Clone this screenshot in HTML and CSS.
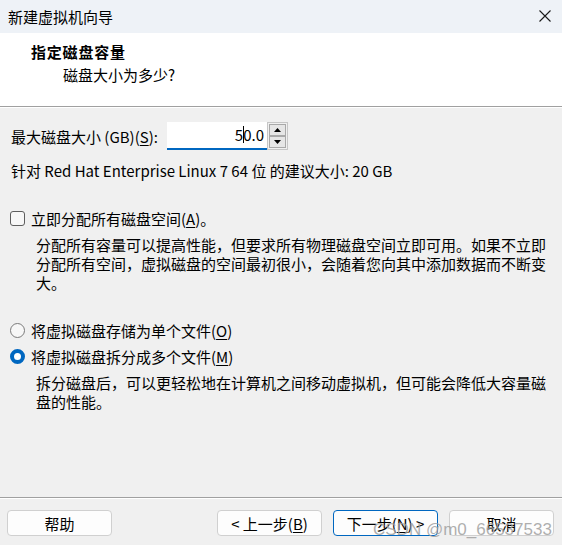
FILE: index.html
```html
<!DOCTYPE html>
<html lang="zh-CN">
<head>
<meta charset="utf-8">
<title>新建虚拟机向导</title>
<link rel="stylesheet" href="styles.css">
</head>
<body>
<div class="dialog">
  <div class="titlebar">
    <span class="title">新建虚拟机向导</span>
    <span class="close">
      <svg width="12" height="12" viewBox="0 0 12 12"><path d="M0.5 0.5 L11.5 11.5 M11.5 0.5 L0.5 11.5" stroke="#1a1a1a" stroke-width="1.1" fill="none"/></svg>
    </span>
  </div>
  <div class="header">
    <div class="h-title">指定磁盘容量</div>
    <div class="h-sub">磁盘大小为多少?</div>
  </div>
  <div class="body">
    <div class="size-row">
      <span class="size-label">最大磁盘大小 (GB)(<u>S</u>):</span>
      <div class="spin">
        <div class="spin-input"><span>5</span><span class="caret"></span><span>0.0</span></div>
        <div class="spin-btns">
          <span class="sb"><svg width="7" height="4" viewBox="0 0 7 4"><path d="M0 4 L3.5 0 L7 4 Z" fill="#000"/></svg></span>
          <span class="sb"><svg width="7" height="4" viewBox="0 0 7 4"><path d="M0 0 L3.5 4 L7 0 Z" fill="#000"/></svg></span>
        </div>
      </div>
    </div>
    <div class="hint">针对 Red Hat Enterprise Linux 7 64 位 的建议大小: 20 GB</div>
    <div class="option check-row"><span class="checkbox"></span><span>立即分配所有磁盘空间(<u>A</u>)。</span></div>
    <p class="desc">分配所有容量可以提高性能，但要求所有物理磁盘空间立即可用。如果不立即分配所有空间，虚拟磁盘的空间最初很小，会随着您向其中添加数据而不断变大。</p>
    <div class="option radio-row first"><span class="radio"></span><span>将虚拟磁盘存储为单个文件(<u>O</u>)</span></div>
    <div class="option radio-row"><span class="radio on"></span><span>将虚拟磁盘拆分成多个文件(<u>M</u>)</span></div>
    <p class="desc">拆分磁盘后，可以更轻松地在计算机之间移动虚拟机，但可能会降低大容量磁盘的性能。</p>
  </div>
  <div class="footer">
    <button class="btn">帮助</button>
    <button class="btn back">&lt; 上一步(<u>B</u>)</button>
    <button class="btn primary">下一步(<u>N</u>) &gt;</button>
    <button class="btn">取消</button>
  </div>
  <div class="watermark">CSDN @m0_66537533</div>
</div>
</body>
</html>
```

FILE: styles.css
```css
* { box-sizing: border-box; }
html, body { margin: 0; padding: 0; }
body {
  width: 562px;
  height: 545px;
  overflow: hidden;
  background: #f0f0f0;
  font-family: "Noto Sans CJK SC", "Microsoft YaHei", sans-serif;
  font-size: 15px;
  color: #000;
}
u { text-decoration: underline; text-decoration-thickness: 1px; text-underline-offset: 2px; }

.dialog {
  position: relative;
  width: 562px;
  height: 545px;
  display: flex;
  flex-direction: column;
  background: #f0f0f0;
}

.titlebar {
  height: 33px;
  flex: none;
  display: flex;
  align-items: center;
  padding: 0 11px 0 8px;
  background: #eef2f7;
}
.title { font-size: 15px; line-height: 19px; color: #000; }
.close { margin-left: auto; display: flex; margin-top: -1px; }

.header {
  height: 74px;
  flex: none;
  background: #fff;
  border-bottom: 1px solid #a0a0a0;
  padding: 9px 0 0 31px;
}
.h-title { font-weight: 700; font-size: 15px; line-height: 19px; letter-spacing: 0.8px; }
.h-sub { margin: 4px 0 0 32px; font-size: 15px; line-height: 19px; }

.body {
  flex: 1;
  padding: 15px 8px 0 11px;
  box-shadow: inset 0 1px 0 #ffffff;
}

.size-row { display: flex; align-items: center; height: 28px; }
.size-label { width: 156px; line-height: 19px; flex: none; }
.spin { display: flex; height: 28px; }
.spin-input {
  width: 100px;
  height: 28px;
  background: #fff;
  border-bottom: 2px solid #0067c0;
  display: flex;
  align-items: center;
  justify-content: flex-end;
  padding: 0 3px 1px 0;
  line-height: 19px;
}
.caret { display: inline-block; width: 1px; height: 17px; background: #000; margin: 0 -1px 0 0; position: relative; }
.spin-btns {
  width: 21px;
  height: 28px;
  display: flex;
  flex-direction: column;
  border: 1px solid #c6c6c6;
  padding: 1px;
  gap: 0;
  background: #f0f0f0;
}
.sb {
  flex: 1;
  border: 1px solid #a9a9a9;
  background: #e6e6e6;
  display: flex;
  align-items: center;
  justify-content: center;
}

.hint { margin-top: 11px; line-height: 19px; }

.option { display: flex; align-items: center; line-height: 19px; height: 19px; }
.check-row { margin-top: 29px; }
.checkbox {
  width: 15px; height: 15px;
  border: 1px solid #5e5e5e;
  border-radius: 3px;
  background: #f7f7f7;
  margin: 0 6px 0 -1px;
  flex: none;
}
.radio-row { margin-top: 7px; }
.radio-row.first { margin-top: 29px; }
.radio {
  width: 15px; height: 15px;
  border: 1px solid #7a7a7a;
  border-radius: 50%;
  background: #f7f7f7;
  margin: 0 6px 0 -1px;
  flex: none;
}
.radio.on {
  border: 4.5px solid #0067c0;
  background: #fff;
}

.desc {
  margin: 7px 0 0 25px;
  line-height: 19px;
}

.footer {
  height: 48px;
  flex: none;
  border-top: 1px solid #a0a0a0;
  box-shadow: inset 0 1px 0 #ffffff;
  display: flex;
  align-items: flex-start;
  padding: 12px 8px 0 7px;
  gap: 11px;
}
.btn {
  width: 105px;
  height: 26px;
  border: 1px solid #d0d0d0;
  border-radius: 4px;
  background: #fdfdfd;
  font-family: inherit;
  font-size: 15px;
  line-height: 19px;
  color: #000;
  padding: 0;
}
.btn.back { margin-left: auto; }
.btn.primary { border-color: #0067c0; }

.watermark {
  position: absolute;
  left: 373px;
  top: 520px;
  font-family: "Liberation Sans", Arial, sans-serif;
  font-size: 17px;
  line-height: 20px;
  color: rgba(160, 160, 160, 0.85);
  pointer-events: none;
  white-space: nowrap;
}
```
